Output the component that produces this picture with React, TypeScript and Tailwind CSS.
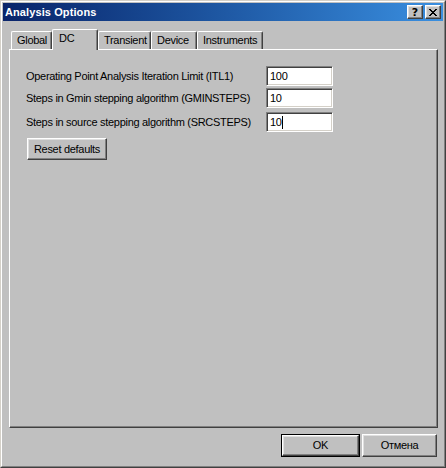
import React from "react";

const raised =
  "border border-t-white border-l-white border-r-[#404040] border-b-[#404040] shadow-[inset_-1px_-1px_0_#808080,inset_1px_1px_0_#dfdfdf]";
const sunken =
  "border border-t-[#808080] border-l-[#808080] border-r-white border-b-white shadow-[inset_1px_1px_0_#404040,inset_-1px_-1px_0_#d4d0c8]";

function Tab({ label, width, selected }: { label: string; width: string; selected?: boolean }) {
  if (selected) {
    return (
      <div
        className={`${width} relative z-10 h-[21px] -mb-px bg-[#c0c0c0] rounded-t-[2px] border-l border-t border-white border-r border-r-[#404040] shadow-[inset_-1px_0_0_#808080] flex items-start pt-[2px] pl-[6px]`}
      >
        <span className="leading-[13px]">{label}</span>
      </div>
    );
  }
  return (
    <div
      className={`${width} h-[18px] bg-[#c0c0c0] rounded-t-[2px] border-l border-t border-white border-r border-r-[#404040] shadow-[inset_-1px_0_0_#808080] flex items-center pl-[5px] pb-px`}
    >
      <span className="leading-[13px]">{label}</span>
    </div>
  );
}

function Row({ label, value, cursor, className }: { label: string; value: string; cursor?: boolean; className: string }) {
  return (
    <div className={`flex items-center ${className}`}>
      <div className="w-[240px] whitespace-nowrap">{label}</div>
      <div className={`w-[67px] h-[20px] bg-white ${sunken} flex items-center pl-[3px]`}>
        <span className="leading-[13px]">{value}</span>
        {cursor && <span className="w-px h-[13px] bg-black" />}
      </div>
    </div>
  );
}

export default function App() {
  return (
    <div className="w-[446px] h-[468px] bg-[#c0c0c0] border border-t-[#d4d0c8] border-l-[#d4d0c8] border-r-[#404040] border-b-[#404040] font-['Liberation_Sans',Arial,sans-serif] text-[11px] tracking-[-0.3px] text-black">
      <div className="h-full border border-t-white border-l-white border-r-[#808080] border-b-[#808080] p-px flex flex-col">
        {/* Title bar */}
        <div className="h-[18px] shrink-0 flex items-center justify-between bg-linear-to-r from-[#0a246a] to-[#3a8fe0] pl-[2px] pr-[2px]">
          <span className="text-white font-bold text-[11px] leading-[13px] tracking-[0.1px]">Analysis Options</span>
          <div className="flex gap-[2px]">
            <div className={`w-[16px] h-[14px] bg-[#c0c0c0] ${raised} flex items-center justify-center`}>
              <span className="font-bold text-[11px] leading-[11px] tracking-normal font-['DejaVu_Sans',sans-serif]">?</span>
            </div>
            <div className={`w-[16px] h-[14px] bg-[#c0c0c0] ${raised} flex items-center justify-center`}>
              <svg width="8" height="7" viewBox="0 0 8 7" shapeRendering="crispEdges">
                <path d="M0 0h2v1H0zM6 0h2v1H6zM1 1h2v1H1zM5 1h2v1H5zM2 2h4v1H2zM3 3h2v1H3zM2 4h4v1H2zM1 5h2v1H1zM5 5h2v1H5zM0 6h2v1H0zM6 6h2v1H6z" fill="#000" />
              </svg>
            </div>
          </div>
        </div>

        {/* Tabs */}
        <div className="mt-[8px] ml-[6px] mr-[5px] flex flex-col flex-1 min-h-0">
          <div className="flex items-end h-[20px] pl-[2px] shrink-0">
            <Tab label="Global" width="w-[41px]" />
            <Tab label="DC" width="w-[46px]" selected />
            <Tab label="Transient" width="w-[53px]" />
            <Tab label="Device" width="w-[46px]" />
            <Tab label="Instruments" width="w-[66px]" />
          </div>
          <div className="flex-1 border border-t-white border-l-white border-r-[#404040] border-b-[#404040] shadow-[inset_-1px_-1px_0_#808080] pl-[16px] pt-[16px]">
            <Row label="Operating Point Analysis Iteration Limit (ITL1)" value="100" className="" />
            <Row label="Steps in Gmin stepping algorithm (GMINSTEPS)" value="10" className="mt-[2px]" />
            <Row label="Steps in source stepping algorithm (SRCSTEPS)" value="10" cursor className="mt-[4px]" />
            <div className={`mt-[6px] ml-px w-[80px] h-[22px] ${raised} flex items-center justify-center`}>
              <span className="leading-[13px]">Reset defaults</span>
            </div>
          </div>
        </div>

        {/* Buttons */}
        <div className="shrink-0 h-[23px] mt-[6px] mb-[8px] flex justify-end gap-[2px] pr-[6px]">
          <div className="w-[79px] h-[23px] border border-black">
            <div className={`h-full ${raised} flex items-center justify-center`}>
              <span className="leading-[13px]">OK</span>
            </div>
          </div>
          <div className={`w-[75px] h-[23px] ${raised} flex items-center justify-center`}>
            <span className="leading-[13px]">Отмена</span>
          </div>
        </div>
      </div>
    </div>
  );
}
